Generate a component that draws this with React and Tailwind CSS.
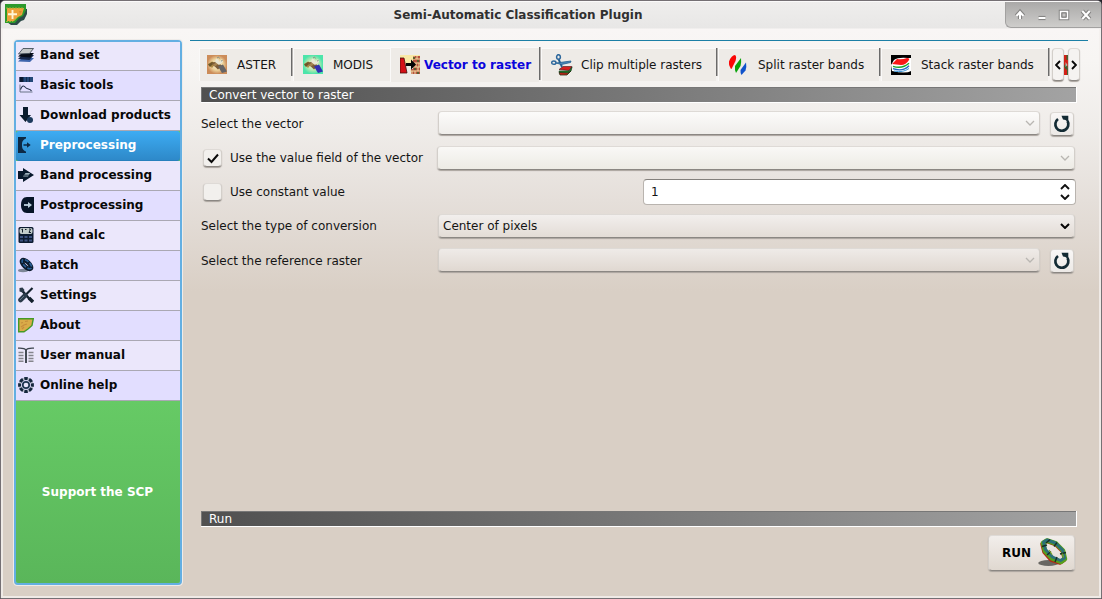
import React from "react";

const NAVY = "#0b1c2e";

const Svg = ({ s = 16, children, vb = 16, className = "" }) => (
  <svg width={s} height={s} viewBox={`0 0 ${vb} ${vb}`} fill="none" className={`shrink-0 ${className}`}>{children}</svg>
);

/* ---------- sidebar icons ---------- */
const BandSetIcon = () => (
  <Svg>
    <path d="M0 14.500 4 11h12l-4 4z" fill="#3f66ad" />
    <path d="M0 12 4 8h12l-4.500 5z" fill="#16284a" />
    <path d="M0 9.500 4 6h12l-4 4.500z" fill="#060d18" />
    <path d="M.5 7 5 1.500h10.500L11.500 6.500z" fill="#c4c8c8" stroke="#34404a" strokeWidth=".8" />
  </Svg>
);
const BasicToolsIcon = () => (
  <Svg>
    <path d="M1.500 0H15v5H1.500z" fill="#234878" />
    <path d="M1.500 0H5v5H1.500z" fill="#0a1830" />
    <path d="M5.300 0v5M8.500 0v5M11.500 0v5" stroke="#102748" strokeWidth=".8" />
    <path d="M2 7.500v7.500h12.500" stroke="#6a7488" strokeWidth="1" />
    <path d="M2.500 12.500c1.500-4.500 3.500-4 5-2 2 2.500 4 .5 6 3.500" stroke="#1d2b45" strokeWidth="1.100" />
  </Svg>
);
const DownloadIcon = () => (
  <Svg>
    <path d="M5 0h5v8h3l-5.500 7L1.500 8H5z" fill={NAVY} />
    <circle cx="12" cy="13" r="3" fill="#1c3a5c" />
  </Svg>
);
const PreIcon = () => (
  <Svg>
    <path d="M0 0h8v1.500C4.500 3 4 5 4 8s.5 5 4 6.500V16H0z" fill="#0d2945" />
    <path d="M5.500 8H10" stroke="#0d2945" strokeWidth="1.500" />
    <path d="M9 5.200l3.700 2.800L9 10.800z" fill="#0d2945" />
  </Svg>
);
const BandProcIcon = () => (
  <Svg>
    <path d="M0 4h5V1l11 7-11 7v-3H0z" fill="#07182b" />
    <path d="M5 9.500 7.500 6H12l-2 3.500z" fill="#9fb3be" />
    <path d="M6 8.200h5" stroke="#07182b" strokeWidth=".8" />
  </Svg>
);
const PostIcon = () => (
  <Svg>
    <path d="M16 0v16H9c-4 0-6-3.500-6-8s2-8 6-8z" fill="#061428" />
    <path d="M6 8h5" stroke="#bcd0de" strokeWidth="1.800" />
    <path d="M10 5l4 3-4 3z" fill="#bcd0de" />
  </Svg>
);
const CalcIcon = () => (
  <Svg>
    <rect x=".5" y="0" width="15" height="16" rx="1.500" fill="#0c1b30" />
    <rect x="1.500" y="1" width="13" height="6" rx="2" fill="#c3cdca" />
    <path d="M3.500 2.500l1-.5v3.500M7 2.500h1.500M11 2h1.500L11 5.500h2" stroke="#15202c" strokeWidth="1" />
    <path d="M2 10h3M6.500 10h3M11 10h3M2 13.500h3M6.500 13.500h3M11 13.500h3" stroke="#3d5280" strokeWidth="2" />
  </Svg>
);
const BatchIcon = () => (
  <Svg>
    <ellipse cx="5" cy="13.500" rx="5" ry="1.700" fill="#7d8797" />
    <g transform="rotate(43 8.500 7.500)">
      <ellipse cx="8.500" cy="7.500" rx="6" ry="2.600" stroke="#0b1a2c" strokeWidth="4.200" />
      <ellipse cx="8.500" cy="7" rx="6" ry="2.800" stroke="#285e96" strokeWidth="1.700" strokeDasharray="4 1.500" />
    </g>
  </Svg>
);
const SettingsIcon = () => (
  <Svg>
    <path d="M3.500 3 12 12.500" stroke="#13202c" strokeWidth="2.600" />
    <path d="M1.500 1v3.500L5 5.500 6.500 3 4.500.5" fill="#2a3947" />
    <path d="M11 11l4 4" stroke="#13202c" strokeWidth="3.500" />
    <path d="M14.500 1 7 8.500" stroke="#13202c" strokeWidth="2.200" />
    <path d="M7 8.500 2.500 13" stroke="#2b3b4b" strokeWidth="4.600" strokeLinecap="round" />
    <path d="M6 9l-4 4" stroke="#728496" strokeWidth=".8" />
  </Svg>
);
const AboutIcon = () => (
  <Svg>
    <path d="M.7 1.700h14.600L14 8.500 10 12l-4 2.800H.7z" fill="#d9ab48" stroke="#459a26" strokeWidth="1.400" />
    <path d="M3 10l3-2 3-1M7 4.500l3-.5M3 6l2-.5M4 12l2-2" stroke="#c58d3c" strokeWidth="1.200" />
  </Svg>
);
const ManualIcon = () => (
  <Svg>
    <path d="M8 3Q6.500.8 0 1.200M8 3Q9.500.8 16 1.200" stroke="#3c444c" strokeWidth="1.300" />
    <path d="M8 2v14" stroke="#3c444c" strokeWidth="1.900" />
    <path d="M.5 5.500h5M.5 8.500h5M.5 11.500h5M.5 14.200h5M10.500 5.500h5M10.500 8.500h5M10.500 11.500h5M10.500 14.200h5" stroke="#85868c" strokeWidth="1.400" />
  </Svg>
);
const HelpIcon = () => (
  <Svg>
    <circle cx="8" cy="8" r="6.300" stroke="#b9bccb" strokeWidth="2.600" />
    <circle cx="8" cy="8" r="6.400" stroke="#13263c" strokeWidth="3" pathLength="80" strokeDasharray="7 3" strokeDashoffset="3.500" />
    <circle cx="8" cy="8" r="3.200" fill="#e7e4fa" stroke="#1e3650" strokeWidth="1.700" />
  </Svg>
);

/* ---------- tab icons ---------- */
const Satellite = ({ id, a, b, body }) => (
  <Svg s={20} vb={20}>
    <defs>
      <radialGradient id={id}><stop offset="0" stopColor="#fff9e0" /><stop offset=".6" stopColor={b} /><stop offset="1" stopColor={a} /></radialGradient>
    </defs>
    <path d="M0 0h20v19H0z" fill={`url(#${id})`} />
    <path d="M1 9 5 6.500 9 8l-4 5z" fill="#ad8a45" />
    <path d="M1 9.500 5 7l2 1-4 4z" fill="#6c5629" />
    <path d="M4.500 8.500 10 6l5 5-4 3.500z" fill="#7c5d38" />
    <path d="M6 9.500l4-2.500 2 1.500-4 3z" fill="#a58450" />
    <path d="M8 7 9 3.500l2.500 1L12 7l3-3 1 3-4 3z" fill="#e9e7d4" />
    <path d="M10 3l1.500-1 1 1.500M14 6l1.500-.5" stroke="#8c9387" strokeWidth="1" />
    <path d="M11 11.500l5-2 4 7-5 1.500z" fill={body} />
  </Svg>
);
const VectorIcon = () => (
  <Svg s={20} vb={20}>
    <path d="M0 0h20v9H0z" fill="#f9e9a6" />
    <path d="M0 3h4l3 15H0z" fill="#d40f16" stroke="#43100c" strokeWidth=".8" />
    <path d="M13 1h7v18h-9v-5h2z" fill="#b8503e" />
    <path d="M12 4h8M12 8h8M11 12h9M10 16h10M14 1v3M17 1v3M13 8v4M16 8v4M19 8v4M12 16v3M15 16v3M18 12v4" stroke="#f0dfa2" strokeWidth="1" />
    <path d="M13 2h2v2h-2zM17 5h2v2h-2zM14 13h2v2h-2zM17 17h2v2h-2z" fill="#5c6130" />
    <path d="M6 8h5V4.500l5 5-5 5V11H6z" fill="#050505" />
  </Svg>
);
const ClipIcon = () => (
  <Svg s={22} vb={22}>
    <path d="M8 15.500l4-3h9l-3 4z" fill="#d71f20" stroke="#481010" strokeWidth=".6" />
    <path d="M8 17h10l3-4-1 4-3 2.500H9z" fill="#20892f" stroke="#123617" strokeWidth=".7" />
    <path d="M8 18.500l1 2.500h7l4-4-3 2z" fill="#c82018" stroke="#233517" strokeWidth=".8" />
    <path d="M7.500 5 11 13" stroke="#225e91" strokeWidth="1.900" />
    <path d="M5 9 20 7l-.5 1.500-9 2z" fill="#4d88b8" stroke="#225e91" strokeWidth=".8" />
    <ellipse cx="7.500" cy="3" rx="1.900" ry="2.300" stroke="#2d679c" strokeWidth="1.500" />
    <ellipse cx="2.800" cy="8.700" rx="2.100" ry="1.600" stroke="#2d679c" strokeWidth="1.500" />
  </Svg>
);
const SplitIcon = () => (
  <Svg s={20} vb={20}>
    <path d="M0 6.500Q2.500 0 6 0q2 1 .5 6l-4 8Q1.500 14 1 12-.5 9 0 6.500z" fill="#fa0606" />
    <path d="M6 11 12 3q.5 4-.5 8L7 18q-1.500-3-1-7z" fill="#08a309" />
    <path d="M11.500 15 17 7.500q.8 4-.5 8L12.500 20q-1.300-2-1-5z" fill="#1053cb" />
  </Svg>
);
const StackIcon = () => (
  <Svg s={20} vb={20}>
    <path d="M0 0h20v20H0z" fill="#000" />
    <path d="M3 5Q7 2 17 3h3v13q-5 3-19 0L0 10z" fill="#fff" />
    <path d="M1 9 6 4q5 1 10-1 3 0 2 2-3 5-8 5z" fill="#fb1717" />
    <path d="M2 11.300q9 3 16-3" stroke="#19a629" strokeWidth="1.400" />
    <path d="M2 13.700q10 3.300 16-3" stroke="#2768c8" strokeWidth="1.400" />
    <path d="M3 16q9 2 15-2.500" stroke="#3e9adb" strokeWidth="1" />
  </Svg>
);
const Logo = () => (
  <Svg s={23} vb={23}>
    <path d="M2 4v14l4 3h6l4-4 3-1 3-6V5z" fill="#2c4b48" />
    <path d="M0 0h21v6l-3 6-4 2-4 5H0z" fill="#2d9a2c" />
    <path d="M2 4h17l-2 7-4 2-4 4H2z" fill="#eda23b" />
    <path d="M1 4h18M1 17.500h7l3-3" stroke="#99af32" strokeWidth="1" strokeDasharray="2 1" />
    <path d="M7.500 6v9M3 10.300h9" stroke="#fff5d8" strokeWidth="1.900" />
    <path d="M14 7h3l-2 3z" fill="#d98b2f" />
  </Svg>
);
const Reload = () => (
  <Svg s={18} vb={18}>
    <path d="M5 4A6.500 6.500 0 1 0 14.500 6" stroke="#132b34" strokeWidth="2.700" />
    <path d="M8.500.8h6.800v6.700L12.500 5l-2.500-.5z" fill="#132b34" />
  </Svg>
);
const RunIcon = () => (
  <svg width="30" height="29" viewBox="0 0 30 29" fill="none" className="shrink-0">
    <ellipse cx="10.500" cy="25" rx="10.300" ry="3" fill="#696763" />
    <g strokeLinejoin="round">
      <path d="M4 6 6 14l7 8 9 3 4.500-3-2-8.500-7-7L8 3z" stroke="#b02a16" strokeWidth="3.500" />
      <path d="M5 5 7 13l7 7.500 9 3.500 4-3-2-8.500-7-7L9 2.500z" stroke="#55a01c" strokeWidth="4.500" />
      <path d="M5.500 4 7.500 11.500l7 7.500 8 3.500 4-2.500-2-8-7-7L9 2z" stroke="#2c7078" strokeWidth="3" />
      <path d="M4 8.500 9 7M9 17l4-3.500M17 24l2-5M22 16l6-1.500M16 8.500l3-4M8 5l4-3.500" stroke="#172f24" strokeWidth="1.400" />
      <path d="M11 12l3 4.500M24.500 15.500l1 4" stroke="#7aa51d" strokeWidth="1.100" />
    </g>
  </svg>
);

const Chevron = ({ up, color = "#101010", w = 1.9 }) => (
  <svg width="10" height="6" viewBox="0 0 10 6" fill="none" className="shrink-0">
    <path d={up ? "M1 5 5 1l4 4" : "M1 1l4 4 4-4"} stroke={color} strokeWidth={w} />
  </svg>
);

const SideChevron = ({ left }) => (
  <svg width="6" height="10" viewBox="0 0 6 10" fill="none" className="shrink-0">
    <path d={left ? "M5 1 1 5l4 4" : "M1 1l4 4-4 4"} stroke="#080808" strokeWidth="1.900" />
  </svg>
);

const menu = [
  ["Band set", BandSetIcon], ["Basic tools", BasicToolsIcon], ["Download products", DownloadIcon],
  ["Preprocessing", PreIcon], ["Band processing", BandProcIcon], ["Postprocessing", PostIcon],
  ["Band calc", CalcIcon], ["Batch", BatchIcon], ["Settings", SettingsIcon],
  ["About", AboutIcon], ["User manual", ManualIcon], ["Online help", HelpIcon],
];

const raised = "rounded-[4px] border border-[#d3cfca] border-t-[#dedad6] border-b-[#8b8783] shadow-[0_1px_1px_#aaa49e]";

function Combo({ width, className, text, active }) {
  return (
    <div className={`flex shrink-0 items-center justify-between pl-1 pr-[4px] ${raised} ${width} ${className}`}>
      <span>{text}</span>
      <Chevron color={active ? "#050505" : "#b9b6b2"} w={active ? 2 : 1.3} />
    </div>
  );
}

function SectionBar({ children }) {
  return (
    <div className="h-4 w-[876px] shrink-0 border-b border-r border-b-white border-r-white">
      <div className="flex h-[15px] items-center border-l border-t border-l-[#777] border-t-[#777] bg-linear-to-r from-[#505050] to-[#a3a3a3] pl-[7px] leading-[14px] text-white">{children}</div>
    </div>
  );
}

function Tab({ icon, label, width, pad, gap, sep, active }) {
  return (
    <div className={`flex shrink-0 ${width}`}>
      <div className={`flex flex-1 items-center border-l border-t border-[#faf9f8] bg-[#eeebe7] ${pad} ${gap} ${active ? "-mt-px h-[35px] font-bold text-[#0b05dc]" : "mt-0 h-[33px]"}`}>
        <span className="flex">{icon}</span>
        <span className="whitespace-nowrap">{label}</span>
      </div>
      {sep && <div className={`w-[2px] shrink-0 border-r border-[#b5b2af] bg-[#6a6a6a] ${active ? "-mt-px h-[33px]" : "h-7"}`} />}
    </div>
  );
}

function RefreshButton() {
  return <div className={`flex h-6 w-6 items-center justify-center bg-linear-to-b from-[#f9f7f6] to-[#ece9e6] ${raised}`}><Reload /></div>;
}

function Check({ on }) {
  return (
    <div className={`flex h-[18px] w-[19px] shrink-0 items-center justify-center bg-[#f2f0ed] ${raised}`}>
      {on && <svg width="12" height="11" viewBox="0 0 12 11" fill="none"><path d="M1 5.500 4.500 9 11 1.500" stroke="#0a0a0a" strokeWidth="2" /></svg>}
    </div>
  );
}

function WindowButtons() {
  return (
    <div className="h-[26px] w-[96px] rounded-bl-md border-b border-l border-[#a2a1a0] bg-linear-to-b from-[#aaa9a8] to-[#cecdcb]">
      <svg width="95" height="25" viewBox="0 0 95 25" fill="none">
        {[["#858483", 4.2], ["#fff", 2]].map(([c, w]) => (
          <g key={c} stroke={c} strokeWidth={w}>
            <path d="M14 17v-6.500M10.500 14 14 10l3.500 4" />
            <path d="M32.500 16h7" />
            <path d="M54.500 9.500h7v7h-7z" strokeWidth={c === "#fff" ? 1.5 : 3.500} />
            <path d="M76.300 9l7.400 8M83.700 9l-7.400 8" />
          </g>
        ))}
        <path d="M56 11h4v4h-4z" fill="#c4c3c2" stroke="#858483" />
      </svg>
    </div>
  );
}

export default function App() {
  return (
    <div className="h-[599px] w-[1102px] overflow-hidden bg-[#24222a] font-['DejaVu_Sans','Noto_Sans',sans-serif] text-[12px] leading-[16px] text-[#151515]">
      <div className="flex h-[599px] flex-col rounded-t-[5px] border border-[#757074] bg-[linear-gradient(to_bottom,#efeeed_0,#e8e7e6_27px,#f9f6f5_28px,#f7f5f3_60px,#efece9_130px,#e5dfda_200px,#d9cfc5_290px,#d9cfc5_100%)]">
        <header className="flex h-7 shrink-0 items-start rounded-t-[4px] border-t border-[#fbfafa] pl-1">
          <div className="pt-[2px]"><Logo /></div>
          <div className="flex-1 pl-[3px] pt-[5px] text-center font-bold text-[#303030]">Semi-Automatic Classification Plugin</div>
          <WindowButtons />
        </header>

        <main className="flex flex-1 border-x-2 border-b-2 border-[#f4f0ed]/80 pl-[10px] pt-[10px]">
          <nav className="h-[547px] w-[170px] shrink-0 rounded-[4px] border border-[#eeebe9] bg-white/30">
            <div className="flex h-[545px] flex-col rounded-[4px] border-2 border-[#63afe2] bg-[#66ca65]">
              <ul className="font-bold text-[#080808]">
                {menu.map(([label, Icon], i) => (
                  <li
                    key={label}
                    className={`flex items-center border-b pl-[2px] ${i === 0 ? "h-[29px] pb-[2px]" : "h-[30px] pb-[1px]"} ${
                      i === 3
                        ? "rounded-[3px] border-[#2780bd] bg-linear-to-b from-[#3dacf3] to-[#2e89c9] text-white"
                        : i % 2 ? "border-[#aaa8b3] bg-[#e2deff]" : "border-[#aaa8b3] bg-[#ebe7fb]"
                    }`}
                  >
                    <Icon />
                    <span className="whitespace-nowrap pl-[6px]">{label}</span>
                  </li>
                ))}
              </ul>
              <div className="flex flex-1 items-center justify-center rounded-[3px] bg-linear-to-b from-[#66ca65] to-[#5ab65a] pb-[1px] pr-[1px] font-bold text-white">
                Support the SCP
              </div>
            </div>
          </nav>

          <section className="ml-[7px] mt-px flex h-[548px] w-[898px] flex-col border-t border-t-[#1c7fa6] pl-[11px] pt-[7px]">
            <div className="-ml-[2px] flex h-[39px] w-[884px] shrink-0">
              <Tab width="w-[94px]" pad="pl-[7px]" gap="gap-[10px]" label="ASTER" sep icon={<Satellite id="sa" a="#cc8c59" b="#ecd29a" body="#656466" />} />
              <Tab width="w-[97px]" pad="pl-[9px]" gap="gap-[10px]" label="MODIS" icon={<Satellite id="sm" a="#4ce5aa" b="#b7e8b1" body="#3330b2" />} />
              <Tab width="w-[151px]" pad="pl-[9px]" gap="gap-1" label="Vector to raster" sep active icon={<VectorIcon />} />
              <Tab width="w-[177px]" pad="pl-[9px]" gap="gap-[8px]" label="Clip multiple rasters" sep icon={<ClipIcon />} />
              <Tab width="w-[163px]" pad="pl-[10px]" gap="gap-[9px]" label="Split raster bands" sep icon={<SplitIcon />} />
              <Tab width="w-[169px]" pad="pl-[9px]" gap="gap-[10px]" label="Stack raster bands" sep icon={<StackIcon />} />
              <div className="ml-[2px] flex h-[33px] w-[28px] items-center text-black">
                <div className={`flex h-[33px] w-[12px] shrink-0 items-center justify-center bg-[#f5f3f1] ${raised}`}>
                  <SideChevron left />
                </div>
                <svg width="4" height="20" viewBox="0 0 4 20" className="shrink-0"><path d="M0 0h4v20H0z" fill="#d32016" /><path d="M2.500 0H4v5H2.500zM0 11l2-2 2 3-2 3zM3 13h1v7H3z" fill="#38612c" /><path d="M1.500 7l2 3-2 2z" fill="#b8b4aa" /></svg>
                <div className={`flex h-[33px] w-[12px] shrink-0 items-center justify-center bg-[#f5f3f1] ${raised}`}>
                  <SideChevron />
                </div>
              </div>
            </div>

            <SectionBar>Convert vector to raster</SectionBar>

            <div className="mt-[8px] flex h-6 shrink-0 items-center">
              <span className="w-[237px] shrink-0 pt-[2px]">Select the vector</span>
              <Combo width="w-[602px]" className="h-6 bg-linear-to-b from-[#fcfbfa] to-[#efedea]" text="" />
              <div className="ml-[10px] pt-px"><RefreshButton /></div>
            </div>
            <div className="mt-[11px] flex h-6 shrink-0 items-center pl-[2px]">
              <Check on />
              <span className="w-[215px] shrink-0 whitespace-nowrap pl-[8px]">Use the value field of the vector</span>
              <Combo width="w-[638px]" className="h-6 bg-linear-to-b from-[#f9f8f6] to-[#edebe5]" text="" />
            </div>
            <div className="mt-[9px] flex h-[26px] shrink-0 items-center pl-[2px]">
              <Check />
              <span className="w-[421px] shrink-0 pl-[8px]">Use constant value</span>
              <div className="flex h-[26px] w-[433px] items-center justify-between rounded-[4px] border border-[#b9b4af] border-t-[#84807c] bg-white pl-[7px] pr-[5px]">
                <span>1</span>
                <div className="flex flex-col gap-1"><Chevron up /><Chevron /></div>
              </div>
            </div>
            <div className="mt-[9px] flex h-6 shrink-0 items-center">
              <span className="w-[237px] shrink-0">Select the type of conversion</span>
              <Combo width="w-[637px]" className="h-6 bg-linear-to-b from-[#f2efed] to-[#e3dcd6]" text="Center of pixels" active />
            </div>
            <div className="mt-[10px] flex h-6 shrink-0 items-center">
              <span className="w-[237px] shrink-0 pt-[2px]">Select the reference raster</span>
              <Combo width="w-[602px]" className="h-6 bg-linear-to-b from-[#efebe8] to-[#e0d8d1]" text="" />
              <div className="ml-[10px] pt-px"><RefreshButton /></div>
            </div>

            <div className="flex-1" />
            <div className="flex h-[77px] shrink-0 flex-col">
              <SectionBar>Run</SectionBar>
              <div className={`ml-[787px] mt-[8px] flex h-9 w-[87px] items-center justify-between bg-linear-to-b from-[#f2eeeb] to-[#e0d8d0] pb-[1px] pl-[13px] pr-[6px] ${raised}`}>
                <span className="font-bold text-black">RUN</span>
                <RunIcon />
              </div>
            </div>
          </section>
        </main>
      </div>
    </div>
  );
}
